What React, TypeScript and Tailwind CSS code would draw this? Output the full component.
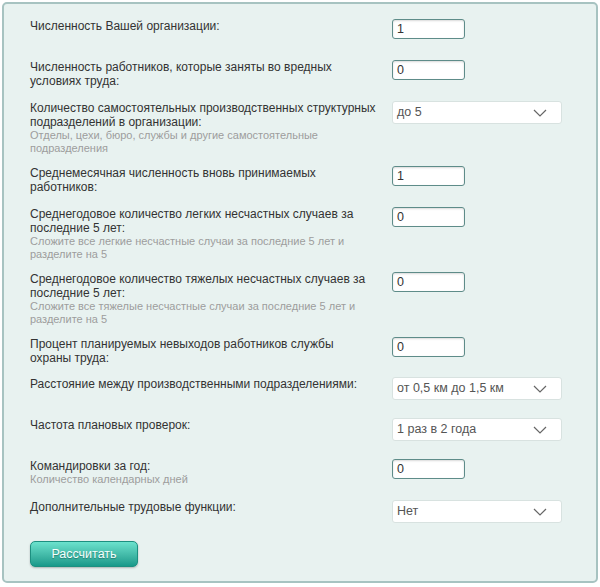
import React from "react";

const Chevron = () => (
  <svg width="14" height="8" viewBox="0 0 14 8" className="absolute right-[14px] top-1/2 -translate-y-1/2">
    <path d="M1 1 L7 7 L13 1" fill="none" stroke="#666" strokeWidth="1.2" />
  </svg>
);

const NumInput = ({ v }: { v: string }) => (
  <div className="w-[73px] h-[20px] bg-white border border-[#5e8c89] rounded-[3px] shadow-[inset_0_1px_2px_rgba(0,0,0,0.15)] pl-[4px] text-[12.5px] leading-[18px] text-[#333]">
    {v}
  </div>
);

const Select = ({ v }: { v: string }) => (
  <div className="relative w-[170px] h-[23px] bg-white border border-[#d8e2e0] rounded-[3px] pl-[4px] text-[12.5px] leading-[21px] text-[#555]">
    {v}
    <Chevron />
  </div>
);

type Row = { label: string[]; hint?: string[]; ctrl: React.ReactNode };

const rows: Row[] = [
  { label: ["Численность Вашей организации:"], ctrl: <NumInput v="1" /> },
  { label: ["Численность работников, которые заняты во вредных", "условиях труда:"], ctrl: <NumInput v="0" /> },
  {
    label: ["Количество самостоятельных производственных структурных", "подразделений в организации:"],
    hint: ["Отделы, цехи, бюро, службы и другие самостоятельные", "подразделения"],
    ctrl: <Select v="до 5" />,
  },
  { label: ["Среднемесячная численность вновь принимаемых", "работников:"], ctrl: <NumInput v="1" /> },
  {
    label: ["Среднегодовое количество легких несчастных случаев за", "последние 5 лет:"],
    hint: ["Сложите все легкие несчастные случаи за последние 5 лет и", "разделите на 5"],
    ctrl: <NumInput v="0" />,
  },
  {
    label: ["Среднегодовое количество тяжелых несчастных случаев за", "последние 5 лет:"],
    hint: ["Сложите все тяжелые несчастные случаи за последние 5 лет и", "разделите на 5"],
    ctrl: <NumInput v="0" />,
  },
  { label: ["Процент планируемых невыходов работников службы", "охраны труда:"], ctrl: <NumInput v="0" /> },
  { label: ["Расстояние между производственными подразделениями:"], ctrl: <Select v="от 0,5 км до 1,5 км" /> },
  { label: ["Частота плановых проверок:"], ctrl: <Select v="1 раз в 2 года" /> },
  { label: ["Командировки за год:"], hint: ["Количество календарных дней"], ctrl: <NumInput v="0" /> },
  { label: ["Дополнительные трудовые функции:"], ctrl: <Select v="Нет" /> },
];

const Lines = ({ lines }: { lines: string[] }) => (
  <>
    {lines.map((l, i) => (
      <React.Fragment key={i}>
        {i > 0 && <br />}
        {l}
      </React.Fragment>
    ))}
  </>
);

export default function App() {
  return (
    <div className="w-[600px] h-[587px] bg-white p-[2px]" style={{ fontFamily: '"Liberation Sans", Arial, sans-serif' }}>
      <div className="h-[581px] w-[596px] border-2 border-[#a7c3c1] rounded-[5px] bg-[#e8f2f0] pl-[26px] pt-[15px]">
        {rows.map((r, i) => (
          <div key={i} className={`flex items-start min-h-[30px] ${i === 6 ? "mb-[10px]" : "mb-[11px]"}`}>
            <div className="w-[362px] shrink-0 whitespace-nowrap">
              <div className="text-[12px] leading-[14px] text-[#333]">
                <Lines lines={r.label} />
              </div>
              {r.hint && (
                <div className="text-[11px] leading-[13px] text-[#9d9d9d]">
                  <Lines lines={r.hint} />
                </div>
              )}
            </div>
            {r.ctrl}
          </div>
        ))}
        <button className="w-[108px] h-[26px] rounded-[5px] border border-[#1d8f80] bg-gradient-to-b from-[#6be2cd] to-[#17998a] text-[#f4fffd] text-[12.5px] shadow-[0_1px_2px_rgba(0,0,0,0.25)] [text-shadow:0_1px_1px_rgba(0,0,0,0.3)] -mt-[1px]">
          Рассчитать
        </button>
      </div>
    </div>
  );
}
